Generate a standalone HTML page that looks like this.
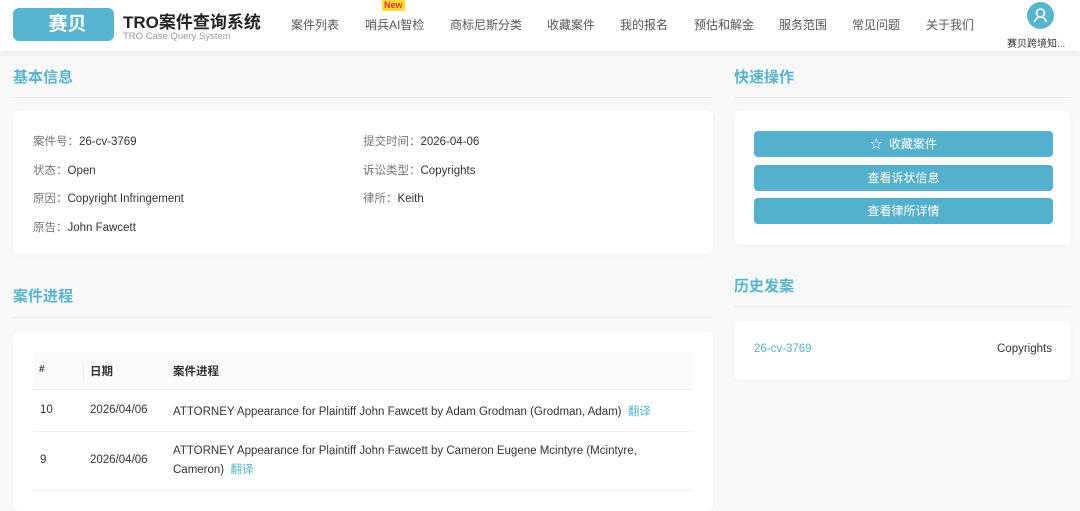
<!DOCTYPE html>
<html><head><meta charset="utf-8"><style>
*{margin:0;padding:0;box-sizing:border-box}
body{width:1080px;height:496px;overflow:hidden;background:#f6f8fa;font-family:"Liberation Sans","Noto Sans CJK SC",sans-serif;color:#333;position:relative;font-size:12px}
.hdr{position:absolute;left:0;top:0;width:1080px;height:51px;background:#fff;box-shadow:0 2px 6px rgba(0,0,0,.06)}
.logo{position:absolute;left:13px;top:8px;width:101px;height:33px;background:#59b5cf;border-radius:6px;color:#fff;font-size:19px;font-weight:bold;text-align:center;line-height:33px;padding-left:8px}
.t1{position:absolute;left:123px;top:8px;font-size:17px;font-weight:bold;color:#222}
.t2{position:absolute;left:123px;top:31px;font-size:9.5px;color:#999}
.nav{position:absolute;top:16px;font-size:12px;color:#555}
.new{position:absolute;left:382px;top:0;font-size:9px;color:#e33;background:#ffd93a;padding:0 2px;line-height:11px;font-weight:bold}
.av{position:absolute;left:1027px;top:2px;width:27px;height:27px;border-radius:50%;background:#59b5cf}
.un{position:absolute;left:1007px;top:35px;font-size:10px;color:#333}
.sec{position:absolute;font-size:15px;font-weight:bold;color:#5ab3cb}
.line{position:absolute;height:1px;background:#e8ecef}
.card{position:absolute;background:#fff;border-radius:6px;box-shadow:0 1px 4px rgba(0,0,0,.04)}
.kv{position:absolute;font-size:11.5px;color:#333}
.kv span{color:#777}
.btn{position:absolute;left:754px;width:299px;height:26px;background:#54b0cb;border-radius:4px;color:#fff;text-align:center;line-height:26px;font-size:12px}
.tx{position:absolute;font-size:11.5px;color:#333}
.tr{color:#5ab3cb}
</style></head><body>
<div class="hdr">
<div class="logo">赛贝</div>
<div class="t1">TRO案件查询系统</div>
<div class="t2">TRO Case Query System</div>
<div class="nav" style="left:291px">案件列表</div>
<div class="new">New</div>
<div class="nav" style="left:365px">哨兵AI智检</div>
<div class="nav" style="left:450px">商标尼斯分类</div>
<div class="nav" style="left:547px">收藏案件</div>
<div class="nav" style="left:620px">我的报名</div>
<div class="nav" style="left:694px">预估和解金</div>
<div class="nav" style="left:779px">服务范围</div>
<div class="nav" style="left:852px">常见问题</div>
<div class="nav" style="left:926px">关于我们</div>
<div class="av"><svg width="27" height="27" viewBox="0 0 27 27" fill="none" stroke="#fff" stroke-width="1.6"><circle cx="13.5" cy="11" r="4"/><path d="M7.5 20c1-3.5 3.5-5 6-5s5 1.5 6 5"/></svg></div>
<div class="un">赛贝跨境知...</div>
</div>
<div class="sec" style="left:13px;top:66px">基本信息</div>
<div class="line" style="left:13px;top:97px;width:700px"></div>
<div class="card" style="left:13px;top:111px;width:700px;height:143px"></div>
<div class="kv" style="left:33px;top:133px"><span>案件号：</span>26-cv-3769</div>
<div class="kv" style="left:33px;top:162px"><span>状态：</span>Open</div>
<div class="kv" style="left:33px;top:190px"><span>原因：</span>Copyright Infringement</div>
<div class="kv" style="left:33px;top:219px"><span>原告：</span>John Fawcett</div>
<div class="kv" style="left:363px;top:133px"><span>提交时间：</span>2026-04-06</div>
<div class="kv" style="left:363px;top:162px"><span>诉讼类型：</span>Copyrights</div>
<div class="kv" style="left:363px;top:190px"><span>律所：</span>Keith</div>
<div class="sec" style="left:13px;top:285px">案件进程</div>
<div class="line" style="left:13px;top:317px;width:700px"></div>
<div class="card" style="left:13px;top:331px;width:700px;height:180px"></div>
<div style="position:absolute;left:33px;top:352px;width:660px;height:38px;background:#fafafa;border-bottom:1px solid #eee"></div>
<div style="position:absolute;left:83px;top:362px;width:1px;height:18px;background:#eee"></div>
<div class="tx" style="left:39px;top:364px;font-weight:bold;font-size:10px">#</div>
<div class="tx" style="left:90px;top:363px;font-weight:bold">日期</div>
<div class="tx" style="left:173px;top:363px;font-weight:bold">案件进程</div>
<div class="tx" style="left:40px;top:404px">10</div>
<div class="tx" style="left:90px;top:404px">2026/04/06</div>
<div class="tx" style="left:173px;top:403px">ATTORNEY Appearance for Plaintiff John Fawcett by Adam Grodman (Grodman, Adam) &nbsp;<span class="tr">翻译</span></div>
<div class="line" style="left:33px;top:431px;width:660px;background:#f0f0f0"></div>
<div class="tx" style="left:40px;top:454px">9</div>
<div class="tx" style="left:90px;top:454px">2026/04/06</div>
<div class="tx" style="left:173px;top:442px;line-height:19px;width:480px">ATTORNEY Appearance for Plaintiff John Fawcett by Cameron Eugene Mcintyre (Mcintyre, Cameron) &nbsp;<span class="tr">翻译</span></div>
<div class="line" style="left:33px;top:490px;width:660px;background:#f0f0f0"></div>
<div class="sec" style="left:734px;top:66px">快速操作</div>
<div class="line" style="left:734px;top:97px;width:337px"></div>
<div class="card" style="left:734px;top:111px;width:337px;height:134px"></div>
<div class="btn" style="top:131px">☆&nbsp; 收藏案件</div>
<div class="btn" style="top:165px">查看诉状信息</div>
<div class="btn" style="top:198px">查看律所详情</div>
<div class="sec" style="left:734px;top:275px">历史发案</div>
<div class="line" style="left:734px;top:306px;width:337px"></div>
<div class="card" style="left:734px;top:321px;width:337px;height:59px"></div>
<div class="tx tr" style="left:754px;top:343px">26-cv-3769</div>
<div class="tx" style="left:997px;top:343px">Copyrights</div>
</body></html>
